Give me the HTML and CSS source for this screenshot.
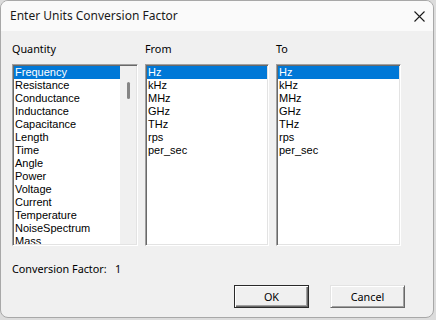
FILE: index.html
```html
<!DOCTYPE html>
<html lang="en">
<head>
    <meta charset="UTF-8">
    <title>Enter Units Conversion Factor</title>
    <link rel="stylesheet" href="styles.css">
</head>
<body>
    <div class="window">
        <div class="titlebar">
            <span class="title">Enter Units Conversion Factor</span>
            <span class="close">
                <svg width="11" height="11" viewBox="0 0 11 11">
                    <path d="M0.5 0.5 L10.5 10.5 M10.5 0.5 L0.5 10.5" stroke="#1a1a1a" stroke-width="1.1" fill="none"/>
                </svg>
            </span>
        </div>
        <div class="content">
            <div class="columns">
                <div class="label">Quantity</div>
                <div class="label">From</div>
                <div class="label">To</div>

                <div class="listbox">
                    <div class="items">
                        <div class="item selected">Frequency</div>
                        <div class="item">Resistance</div>
                        <div class="item">Conductance</div>
                        <div class="item">Inductance</div>
                        <div class="item">Capacitance</div>
                        <div class="item">Length</div>
                        <div class="item">Time</div>
                        <div class="item">Angle</div>
                        <div class="item">Power</div>
                        <div class="item">Voltage</div>
                        <div class="item">Current</div>
                        <div class="item">Temperature</div>
                        <div class="item">NoiseSpectrum</div>
                        <div class="item">Mass</div>
                    </div>
                    <div class="scrollbar"><div class="thumb"></div></div>
                </div>

                <div class="listbox">
                    <div class="items">
                        <div class="item selected">Hz</div>
                        <div class="item">kHz</div>
                        <div class="item">MHz</div>
                        <div class="item">GHz</div>
                        <div class="item">THz</div>
                        <div class="item">rps</div>
                        <div class="item">per_sec</div>
                    </div>
                </div>

                <div class="listbox">
                    <div class="items">
                        <div class="item selected">Hz</div>
                        <div class="item">kHz</div>
                        <div class="item">MHz</div>
                        <div class="item">GHz</div>
                        <div class="item">THz</div>
                        <div class="item">rps</div>
                        <div class="item">per_sec</div>
                    </div>
                </div>
            </div>

            <div class="factor">
                <span class="factor-label">Conversion Factor:</span>
                <span class="factor-value">1</span>
            </div>

            <div class="actions">
                <button class="btn default">OK</button>
                <button class="btn">Cancel</button>
            </div>
        </div>
    </div>
</body>
</html>
```

FILE: styles.css
```css
* {
    margin: 0;
    padding: 0;
    box-sizing: border-box;
}
body {
    background: #dcdcdc;
    width: 436px;
    height: 320px;
    overflow: hidden;
    font-family: "Noto Sans", "Liberation Sans", sans-serif;
    font-size: 12px;
    color: #000;
}
.window {
    width: 434px;
    height: 318px;
    border: 1px solid #a8a8a8;
    border-radius: 8px;
    background: #f0f0f0;
    overflow: hidden;
    display: flex;
    flex-direction: column;
}
.titlebar {
    height: 30px;
    background: #fafafa;
    display: flex;
    align-items: center;
    justify-content: space-between;
    padding: 0 8px 0 9px;
}
.title {
    font-size: 12px;
    color: #1a1a1a;
    padding-bottom: 1px;
}
.close {
    display: flex;
    width: 11px;
    height: 11px;
}
.content {
    padding: 11px 0 0 11px;
}
.columns {
    display: grid;
    grid-template-columns: 126px 124px 125px;
    grid-template-rows: 14px 182px;
    column-gap: 7px;
    row-gap: 8px;
}
.label {
    line-height: 14px;
    font-size: 10.8px;
}
.listbox {
    display: flex;
    background: #fff;
    border: 1px solid;
    border-color: #a0a0a0 #fff #fff #a0a0a0;
    box-shadow: inset 1px 1px #696969, inset -1px -1px #e3e3e3;
    padding: 1px;
    overflow: hidden;
}
.items {
    flex: 1;
    overflow: hidden;
    font-family: "Liberation Sans", Arial, sans-serif;
    font-size: 11px;
}
.item {
    height: 13px;
    line-height: 13px;
    padding-left: 1px;
    white-space: nowrap;
}
.item.selected {
    background: #0078d7;
    color: #fff;
}
.scrollbar {
    width: 16px;
    background: #f0f0f0;
    padding: 16px 0 0 7px;
}
.thumb {
    width: 3px;
    height: 17px;
    border-radius: 2px;
    background: #858585;
}
.factor {
    margin-top: 16px;
    line-height: 14px;
    display: flex;
    font-size: 10.8px;
}
.factor-label {
    width: 103px;
}
.actions {
    display: flex;
    gap: 21px;
    margin-top: 9px;
    padding-left: 222px;
}
.btn {
    width: 75px;
    height: 23px;
    font-family: "Noto Sans", "Liberation Sans", sans-serif;
    font-size: 10.8px;
    color: #000;
    background: #f0f0f0;
    border: 1px solid;
    border-color: #e3e3e3 #696969 #696969 #e3e3e3;
    box-shadow: inset 1px 1px #fff, inset -1px -1px #a0a0a0;
}
.btn.default {
    border-color: #2a2a2a;
    box-shadow: inset 1px 1px #fff, inset -1px -1px #696969, inset -2px -2px #a0a0a0;
}
```
